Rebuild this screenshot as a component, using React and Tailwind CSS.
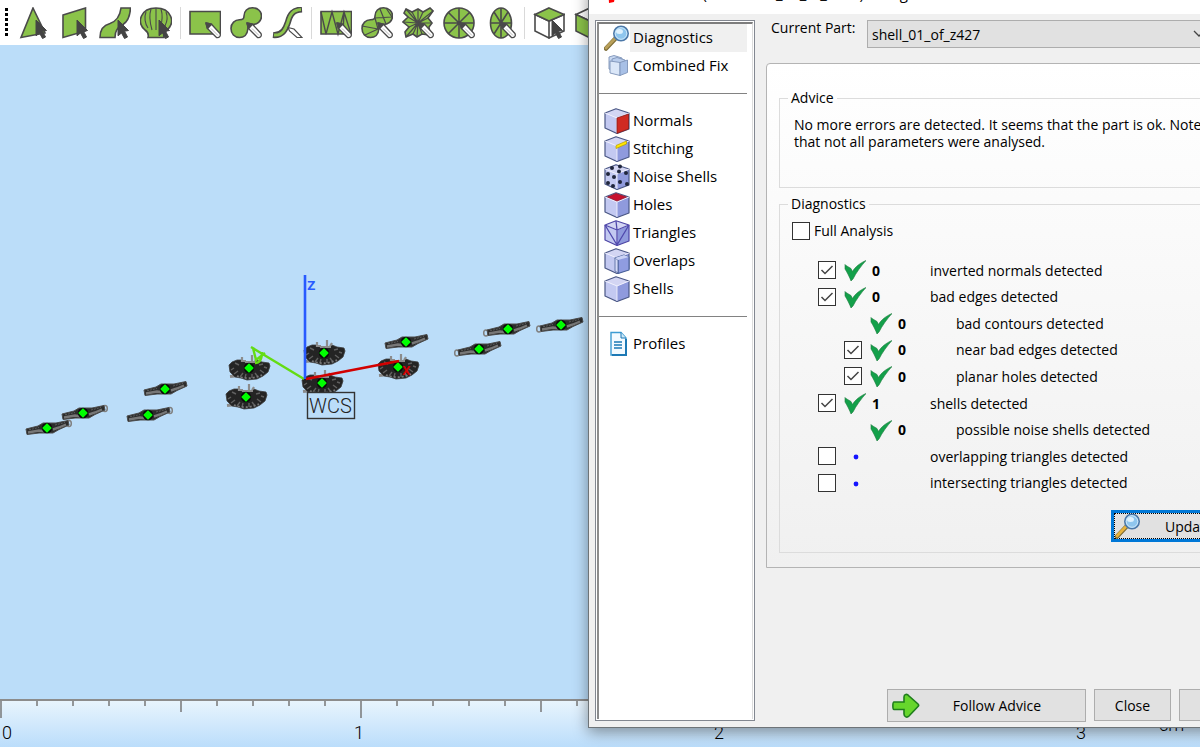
import { useState } from 'react';
import clsx from 'clsx';

const GREEN = '#8bc34a';
const INK = '#4a4a4a';

const Cursor = () => (
  <path d="M19 13L29.5 23.5L25.5 24.2L28.5 30L25.5 31.5L22.5 26L19 28.8Z" fill="#444" stroke="#444" strokeWidth="1" />
);

const Pen = () => (
  <g strokeLinejoin="round">
    <path d="M17 16L22.5 17.2L31 26.5C32 29 30.5 31 27.5 30.5L18.5 21.5Z" fill="#fff" stroke={INK} strokeWidth="1.3" />
    <path d="M17 16L22.5 17.2L18.5 21.5Z" fill={INK} />
    <path d="M22 21.5L29 28.5" stroke="#999" strokeWidth="0.7" />
  </g>
);

const blob = 'M22.5 0.8C28 0.8 31.5 4.5 31.5 9C31.5 14.5 27 17.5 22 17.5C18.5 17.8 18 19.5 17.8 22C17.5 27.5 14 30.5 9.5 30.5C4.5 30.5 1 27 1 21.5C1 16 5 13 9.5 12.8C13 12.6 14 12 14 9C14 4 17.5 0.8 22.5 0.8Z';

const toolGroups = [
  [
    { name: 'Select triangle', art: <><path d="M16 1L28 26L4 30.5Z" /><Cursor /></> },
    { name: 'Select plane', art: <><path d="M5 8L27.5 1V24L5 30.5Z" /><Cursor /></> },
    { name: 'Select surface', art: <><path d="M22 1H31.5C31 10 28 15 24 17.5C18 21 16 24 16 30.5H1C1 22 5 18 11 16.5C18 14 21 9 22 1Z" /><Cursor /></> },
    { name: 'Select shell', art: <><path d="M8 30.5C9 27 8 25 5 23C-4 15 1 1 16 1C31 1 36 15 27 23C24 25 23 27 24 30.5Z" /><path d="M16 1V23M11 2C9 8 10 16 12 23M21 2C23 8 22 16 20 23M6 5C4 10 5 17 8 21M26 5C28 10 27 15 25 19" fill="none" strokeWidth="1.1" /><Cursor /></> },
  ],
  [
    { name: 'Rectangle selection', art: <><path d="M1 4.5H31.5V27H1Z" /><Pen /></> },
    { name: 'Freeform selection', art: <><path d={blob} /><Pen /></> },
    { name: 'Brush selection', art: <><path d="M2 28C12 29 15 21 17 15C19 7 22 3 31 2.5" fill="none" strokeWidth="6.2" /><path d="M3 28C12 29 15 21 17 15C19 7 22 3 30 2.5" fill="none" stroke={GREEN} strokeWidth="3" /><path d="M17 20.5L23 22L31 30.5H26L18.5 24Z" fill="#fff" strokeWidth="1.2" /></> },
  ],
  [
    { name: 'Rectangle triangles', art: <><path d="M1 4.5H31.5V27H1Z" /><path d="M1 5L6 27L12 5L18 27L24 5L31 27M24 5L23 27" fill="none" strokeWidth="1.4" /><Pen /></> },
    { name: 'Freeform triangles', art: <><path d={blob} /><path d="M14 11L31 10M19 2L25 17M25 1L31 10M1 19L17 22M4 28L17 22M14 11L17 22" fill="none" strokeWidth="1.2" /><Pen /></> },
    { name: 'Star triangles', art: <><path d="M4 2L10 5L16 2L21 5L28 1L31 4L26 11L30 16L27 20L28 28L20 27L15 30L11 27L4 30L3 25L7 20L1 15L6 10L2 6Z" /><path d="M16 16L4 2M16 16L10 5M16 16V2M16 16L21 5M16 16L31 4M16 16L26 11M16 16L30 16M16 16L28 28M16 16L20 27M16 16L15 30M16 16L11 27M16 16L4 30M16 16L7 20M16 16L1 15M16 16L6 10" fill="none" strokeWidth="1.2" /><Pen /></> },
    { name: 'Circle triangles', art: <><circle cx="16" cy="16" r="15" /><path d="M16 1V31M1 16H31M5.5 5.5L26.5 26.5M26.5 5.5L5.5 26.5" fill="none" strokeWidth="1.6" /><Pen /></> },
    { name: 'Ellipse triangles', art: <><ellipse cx="17" cy="16" rx="10.5" ry="15" /><path d="M17 1V31M6.5 16H27.5M10 5L24 27M24 5L10 27" fill="none" strokeWidth="1.6" /><Pen /></> },
  ],
  [
    { name: 'Top view', art: <><path d="M2 7.5L16 14V31L2 24ZM31 7.5L16 14V31L31 24Z" fill="#fff" /><path d="M16 1L31 7.5L16 14L2 7.5Z" /><Cursor /></> },
    { name: 'Side view', art: <><path d="M16 1L31 7.5L16 14L2 7.5ZM31 7.5L16 14V31L31 24Z" fill="#fff" /><path d="M2 7.5L16 14V31L2 24Z" /></> },
  ],
];

const ToolButton = ({ name, art }) => (
  <button type="button" aria-label={name} className="size-8 shrink-0">
    <svg viewBox="0 0 32 32" className="size-8" fill={GREEN} stroke={INK} strokeWidth="1.6">
      {art}
    </svg>
  </button>
);

const Toolbar = () => (
  <div className="flex h-[45px] shrink-0 items-start gap-2 bg-white pt-[7px] pl-[5px]">
    <svg viewBox="0 0 4 32" className="h-8 w-1 shrink-0">
      <path d="M1.5 1V31" stroke="#000" strokeWidth="3" strokeDasharray="3 2" />
    </svg>
    {toolGroups.map((group, i) => (
      <div key={i} className="flex gap-2">
        {i > 0 && <div className="h-8 w-px shrink-0 bg-[#d9d9d9]" />}
        <div className="flex gap-[9px]">
          {group.map((tool) => (
            <ToolButton key={tool.name} {...tool} />
          ))}
        </div>
      </div>
    ))}
  </div>
);

// Side-on parts; ring says on which end the open eyelet sits
const slabs = [
  { x: 47, y: 428, ring: 'right' },
  { x: 83, y: 413, ring: 'right' },
  { x: 148, y: 415, ring: 'right' },
  { x: 165, y: 389 },
  { x: 406, y: 342 },
  { x: 479, y: 349, ring: 'left' },
  { x: 508, y: 329, ring: 'left' },
  { x: 561, y: 325, ring: 'left' },
];

const dishes = [
  { x: 249, y: 368 },
  { x: 246, y: 397 },
  { x: 324, y: 353 },
  { x: 322, y: 383 },
  { x: 398, y: 367 },
];

const Marker = () => (
  <>
    <circle r="5.2" fill="#0a0a0a" />
    <path d="M0 -3.8L3.8 0L0 3.8L-3.8 0Z" fill="#0f0" stroke="#0f0" strokeWidth="1.6" strokeLinejoin="round" />
  </>
);

const Slab = ({ x, y, ring }) => (
  <g transform={`translate(${x} ${y})`}>
    {ring === 'right' && <ellipse cx="22" cy="-4.5" rx="2.3" ry="3" fill="none" stroke="#808080" strokeWidth="1.5" />}
    {ring === 'left' && <ellipse cx="-22" cy="4" rx="2.3" ry="3" fill="none" stroke="#808080" strokeWidth="1.5" />}
    <path d="M-21 1L-9 -2L-4 -5L9 -5L21 -7.5L22 -3L12 1.5L6 5L-8 5L-20 6.5Z" fill="#2c2c2c" stroke="#4c4c4c" strokeWidth="1" />
    <path d="M-19 4.5L-8 2.5L-3 3.2M6 1.5L12 -0.5L19 -3.5" stroke="#777" strokeWidth="2.4" fill="none" />
    <path d="M-18 1.8L-8 -0.5M8 -3L18 -5.5" stroke="#5c5c5c" strokeWidth="1" strokeDasharray="2 1" fill="none" />
    <Marker />
  </g>
);

const Dish = ({ x, y }) => (
  <g transform={`translate(${x} ${y})`}>
    <path d="M-19 8.5L-14 8" stroke="#8a8a8a" strokeWidth="3" />
    <path d="M-20 -3L-17 -6L-12 -8H-7L-5 -6H5L8 -8L13 -6L20 -5L21 -2L19 4L14 8L8 11L-2 12L-8 10L-14 9L-19 4Z" fill="#242424" stroke="#3c3c3c" strokeWidth="0.8" />
    <path d="M-18 2L-15 0M-15 6L-11 3M-9 9L-6 5M-4 10L-3 6M3 10L3 6M9 9L6 5M15 5L11 2M18 0L15 -1M-14 -5L-10 -3M14 -4L10 -3" stroke="#606060" strokeWidth="1.4" />
    <path d="M-12 8C-5 11 5 11 13 7" stroke="#787878" strokeWidth="1.8" strokeDasharray="2 2" fill="none" />
    <path d="M-7 -11V-7H-3M3 -13V-6M8 -10L6 -7M-4 -6H7" stroke="#8c8c8c" strokeWidth="2.2" fill="none" />
    <Marker />
  </g>
);

const Scene = () => (
  <div className="relative min-h-0 grow overflow-hidden bg-[#bbddf9]">
    <svg className="size-full">
      <g transform="translate(0 -45)">
        {slabs.map((part) => (
          <Slab key={`${part.x}-${part.y}`} {...part} />
        ))}
        {dishes.map((part) => (
          <Dish key={`${part.x}-${part.y}`} {...part} />
        ))}
        <path d="M304 379L251 347M253 348L256 360L265 353M262 352C262 359 260 363 255 363" stroke="#64dc14" strokeWidth="2.4" fill="none" />
        <path d="M305 275V379" stroke="#285aff" strokeWidth="2.6" />
        <path d="M306 379L399 361" stroke="#d20000" strokeWidth="2.8" />
        <g fontSize="17" className="font-['Roboto',sans-serif] font-medium">
          <text x="307" y="290" fill="#285aff">z</text>
          <text x="402" y="375" fill="#d20000">x</text>
        </g>
        <rect x="307.5" y="392.5" width="47" height="26" fill="#bbddf9" stroke="#333" strokeWidth="1.4" />
        <text x="309" y="413" fill="#222" fontSize="20" className="font-['Roboto',sans-serif] font-light">WCS</text>
      </g>
    </svg>
  </div>
);

const ticks = Array.from({ length: 60 }, (_, i) => i);

const Ruler = () => (
  <div className="h-12 shrink-0 overflow-hidden border-t-2 border-[#8c8c8c] bg-linear-to-b from-[#e8f4fd] to-[#bbddfb]">
    <svg className="size-full">
      {ticks.map((i) => (
        <path
          key={i}
          d={`M${i * 36 + 1} 0V${i % 10 === 0 ? 17 : i % 5 === 0 ? 11 : 5}`}
          stroke="#777"
          strokeWidth="1.5"
        />
      ))}
      <g fontSize="18" fill="#000" className="font-['Roboto',sans-serif] font-light">
        <text x="2" y="38">0</text>
        <text x="354" y="38">1</text>
        <text x="714" y="38">2</text>
        <text x="1076" y="38">3</text>
        <text x="1159" y="30">cm</text>
      </g>
    </svg>
  </div>
);

const Magnifier = ({ handle }) => (
  <svg viewBox="0 0 26 26" className="size-[26px] shrink-0">
    <path d="M2 23.5L11 14" stroke="#7d6c35" strokeWidth="4.5" strokeLinecap="round" />
    <path d="M2 23L11 13.5" stroke={handle} strokeWidth="2.8" strokeLinecap="round" />
    <circle cx="17" cy="8.5" r="7.2" fill="#8fc6ee" stroke="#4c78a8" strokeWidth="1.6" />
    <circle cx="17" cy="8.5" r="5.8" fill="none" stroke="#d5ebfa" strokeWidth="0.9" />
    <ellipse cx="15.5" cy="6.5" rx="3.5" ry="2.5" fill="#dff1fd" />
  </svg>
);

const Cube = ({ top = '#d3d5f3', front = '#c3c9f1', side = '#8f9add', edge = '#4a5785', children }) => (
  <svg viewBox="0 0 26 26" className="size-[26px] shrink-0" strokeLinejoin="round">
    <path d="M1 5L13 10V25.5L1 20Z" fill={front} />
    <path d="M25 5L13 10V25.5L25 21Z" fill={side} />
    <path d="M1 5L12 0.7L25 5L13 10Z" fill={top} />
    <path d="M1 5L12 0.7L25 5V21L13 25.5L1 20Z" fill="none" stroke={edge} strokeWidth="1.2" />
    <path d="M1 5L13 10L25 5M13 10V25" fill="none" stroke="#f0f1fd" strokeWidth="0.9" />
    {children}
  </svg>
);

const checkGroups = [
  [
    { label: 'Diagnostics', icon: <Magnifier handle="#b9a05a" /> },
    {
      label: 'Combined Fix',
      icon: (
        <svg viewBox="0 0 26 26" className="size-[26px] shrink-0" stroke="#7e93b8" strokeWidth="0.9" strokeLinejoin="round">
          <path d="M5 4L10 2.5L18 5V17L13 19L5 16Z" fill="#c8d9f2" />
          <path d="M8 6L13 4.5L21 7V19L16 21L8 18Z" fill="#b9cdec" />
          <path d="M6 8L16 9.5V22.5L6 20Z" fill="#dbe7f8" />
          <path d="M16 9.5L23.5 7V19.5L16 22.5Z" fill="#a8c0e6" />
        </svg>
      ),
    },
  ],
  [
    { label: 'Normals', icon: <Cube><path d="M13 10L24.5 6V21L13 25.3Z" fill="#cf2a22" stroke="#8c1a16" strokeWidth="0.8" /></Cube> },
    { label: 'Stitching', icon: <Cube><path d="M12 9.5L22.5 5V8L12 12.5Z" fill="#ffe600" stroke="#b59b00" strokeWidth="0.7" /></Cube> },
    {
      label: 'Noise Shells',
      icon: (
        <Cube>
          <g fill="#20263c">
            {[[4, 10], [10, 13], [4, 19], [9, 22], [8, 4], [16, 2.5], [15, 7.5], [22, 9], [16, 18], [23, 20]].map(([cx, cy]) => (
              <circle key={`${cx}-${cy}`} cx={cx} cy={cy} r="2" />
            ))}
          </g>
        </Cube>
      ),
    },
    { label: 'Holes', icon: <Cube><path d="M3.5 5L12 1.5L22.5 5L13 9Z" fill="#c8102e" stroke="#90152a" strokeWidth="0.8" /></Cube> },
    {
      label: 'Triangles',
      icon: <Cube edge="#4d45a5"><path d="M1 5L13 10L25 5M13 10V25M1 5L13 25L25 5M12 1L13 10" fill="none" stroke="#5049ad" strokeWidth="1.3" /></Cube>,
    },
    {
      label: 'Overlaps',
      icon: <Cube><path d="M11 10L20 7L25 9V22L14 25.5V12Z" fill="#8f9ce0" stroke="#4b6299" strokeWidth="1.1" /><path d="M11 10L14 12V25L11 23Z" fill="#d5daf7" stroke="#4b6299" strokeWidth="0.8" /><path d="M11 10L20 7L25 9L14 12Z" fill="#cbd3f5" /></Cube>,
    },
    { label: 'Shells', icon: <Cube /> },
  ],
  [
    {
      label: 'Profiles',
      icon: (
        <svg viewBox="0 0 26 26" className="size-[26px] shrink-0" fill="none" stroke="#1d79b5">
          <path d="M7 1.5H17L22 7V24H7Z" fill="#f3faff" stroke="#3c9bd2" strokeWidth="1.4" />
          <path d="M17 1.5V7H22" fill="#cfe9f8" strokeWidth="1" />
          <path d="M22 8V24H8" strokeWidth="2" />
          <path d="M10 11H18M10 14H18M10 17H18" strokeWidth="1.4" />
        </svg>
      ),
    },
  ],
];

const Sidebar = ({ current, onChange }) => (
  <nav className="mt-1.5 mb-1.5 w-40 shrink-0 border border-[#828790] bg-white p-px">
    <div className="h-full border-t-2 border-r border-l-2 border-t-[#7d7d7d] border-r-[#dcdcdc] border-l-[#8c8c8c] pr-[5px]">
      {checkGroups.map((group, i) => (
        <div key={i}>
          {i > 0 && <hr className="my-[13px] border-[#828282]" />}
          {group.map(({ label, icon }) => (
            <button
              key={label}
              type="button"
              onClick={() => onChange(label)}
              className="flex h-7 w-full items-center pl-[5px] text-left text-[15px] leading-[26px]"
            >
              {icon}
              <span className={clsx('h-7 grow pl-[3px]', current === label && 'bg-[#f0f0f0]')}>{label}</span>
            </button>
          ))}
        </div>
      ))}
    </div>
  </nav>
);

const results = [
  { id: 'normals', count: 0, label: 'inverted normals detected', checked: true },
  { id: 'edges', count: 0, label: 'bad edges detected', checked: true },
  { id: 'contours', count: 0, label: 'bad contours detected', nested: true },
  { id: 'near', count: 0, label: 'near bad edges detected', nested: true, checked: true },
  { id: 'planar', count: 0, label: 'planar holes detected', nested: true, checked: true },
  { id: 'shells', count: 1, label: 'shells detected', checked: true },
  { id: 'noise', count: 0, label: 'possible noise shells detected', nested: true },
  { id: 'overlap', label: 'overlapping triangles detected', checked: false },
  { id: 'intersect', label: 'intersecting triangles detected', checked: false },
];

const CheckBox = ({ id, defaultChecked }) => (
  <span className="grid size-[18px] shrink-0 place-items-center">
    <input
      id={id}
      type="checkbox"
      defaultChecked={defaultChecked}
      className="peer col-start-1 row-start-1 size-[18px] appearance-none border border-[#333] bg-white"
    />
    <svg viewBox="0 0 18 18" className="pointer-events-none col-start-1 row-start-1 hidden size-[18px] peer-checked:block">
      <path d="M3.5 9L7 12.5L14.5 5" fill="none" stroke="#444" strokeWidth="1.5" />
    </svg>
  </span>
);

const ResultRow = ({ id, count, label, nested, checked }) => (
  <li className={clsx('flex items-center', nested && 'pl-[26px]')}>
    {checked === undefined ? <span className="w-[18px] shrink-0" /> : <CheckBox id={id} defaultChecked={checked} />}
    <svg viewBox="0 0 22 22" className="ml-2 size-[22px] shrink-0">
      {count === undefined ? (
        <circle cx="12" cy="12" r="2.4" fill="#1414ff" />
      ) : (
        <path d="M1 5.5L2 6.5L7 9.5L8.5 12.5C11 8 16 4 22 1.5C17 7 12 14 9 20L7 22C6 19 3 13 1 10Z" fill="#13a04a" stroke="#1c7a3c" strokeWidth="0.6" />
      )}
    </svg>
    <span className="w-16 shrink-0 pl-1.5 font-bold">{count}</span>
    <label htmlFor={id}>{label}</label>
  </li>
);

const buttonClass = 'flex shrink-0 items-center justify-center border border-[#adadad] bg-[#e1e1e1]';

const FixDialog = () => {
  const [current, setCurrent] = useState('Diagnostics');

  return (
    <section className="absolute -top-4 -right-16 bottom-[19px] left-[588px] flex flex-col border border-[#6e7478] bg-[#f0f0f0] text-[14px] text-black shadow-[0_4px_14px_rgba(0,0,0,0.4)]">
      <header className="flex h-[29px] shrink-0 items-start gap-2 bg-white pl-[18px] text-[15px] leading-4">
        <svg viewBox="0 0 12 20" className="h-5 w-3 shrink-0">
          <path d="M1 2H10L7 17L2 18Z" fill="#f00" />
        </svg>
        <h1 className="whitespace-nowrap">Fix Wizard (Part: shell_01_of_z427) - Diagnostics</h1>
      </header>

      <div className="flex min-h-0 grow pl-1.5">
        <Sidebar current={current} onChange={setCurrent} />

        <div className="flex min-w-0 grow flex-col pt-1.5 pr-[14px] pb-[5px] pl-[11px]">
          <div className="flex items-start pr-10 pl-[5px]">
            <label htmlFor="part" className="w-24 shrink-0 leading-4">Current Part:</label>
            <div className="relative grow">
              <select id="part" className="h-7 w-full appearance-none border border-[#adadad] bg-[#e1e1e1] pl-1">
                <option>shell_01_of_z427</option>
              </select>
              <svg viewBox="0 0 12 8" className="pointer-events-none absolute top-[10px] right-1 h-2 w-3">
                <path d="M1 1L6 6L11 1" fill="none" stroke="#444" strokeWidth="1.3" />
              </svg>
            </div>
          </div>

          <div className="mt-[15px] flex flex-col gap-1.5 rounded-t border border-[#b4b4b4] bg-linear-to-b from-white to-[#f0f0f0] px-3 pt-6 pb-[14px]">
            <fieldset className="h-[100px] border border-[#dcdcdc] px-3">
              <legend className="-ml-1 px-[3px] leading-5">Advice</legend>
              <p className="mt-2 ml-0.5 max-w-[410px] leading-[17px]">
                No more errors are detected. It seems that the part is ok. Note that not all parameters were analysed.
              </p>
            </fieldset>

            <fieldset className="border border-[#dcdcdc] px-3 pb-[10px]">
              <legend className="-ml-1 px-[3px] leading-5">Diagnostics</legend>
              <div className="mt-2 flex items-center gap-1 leading-[18px]">
                <CheckBox id="full" defaultChecked={false} />
                <label htmlFor="full">Full Analysis</label>
              </div>
              <ul className="mt-[17px] grid h-[239px] auto-rows-fr pl-[26px]">
                {results.map((row) => (
                  <ResultRow key={row.id} {...row} />
                ))}
              </ul>
              <button type="button" className="mt-[14px] ml-auto flex h-8 w-28 border-3 border-[#0078d7] bg-[#e1e1e1]">
                <span className="flex grow items-center gap-6 border border-dotted border-black">
                  <Magnifier handle="#e8b33c" />
                  Update
                </span>
              </button>
            </fieldset>
          </div>

          <footer className="mt-auto flex items-start gap-2 pl-[121px]">
            <button type="button" className={clsx(buttonClass, 'h-[33px] w-[199px] pr-11 pl-1')}>
              <svg viewBox="0 0 28 28" className="size-7">
                <path d="M2 10H12V5C12 2 15 1.500 17 4L26 12C27 13 27 13.500 26 14.500L17 24C15 26 12 25 12 22V17.500H2C0.500 17.500 0.500 10 2 10Z" fill="#66d62c" stroke="#1f7d1c" strokeWidth="1.6" />
              </svg>
              <span className="grow text-right">Follow Advice</span>
            </button>
            <button type="button" className={clsx(buttonClass, 'h-8 w-[77px]')}>Close</button>
            <button type="button" className={clsx(buttonClass, 'h-8 w-[77px]')}>Help</button>
          </footer>
        </div>
      </div>
    </section>
  );
};

const App = () => (
  <div className="relative flex h-screen flex-col overflow-hidden font-['Open_Sans',sans-serif]">
    <Toolbar />
    <Scene />
    <Ruler />
    <FixDialog />
  </div>
);

export default App;
